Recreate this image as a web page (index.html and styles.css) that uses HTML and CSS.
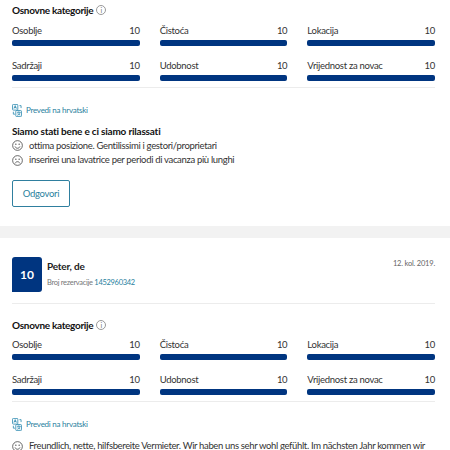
FILE: index.html
```html
<!DOCTYPE html>
<html lang="hr">
<head>
<meta charset="utf-8">
<title>Recenzije</title>
<link rel="stylesheet" href="styles.css">
</head>
<body>
<svg class="defs" width="0" height="0" aria-hidden="true">
  <symbol id="translate" viewBox="0 0 12 16">
    <g fill="none" stroke="#2c8ab0" stroke-width="1">
      <rect x="0.5" y="0.5" width="6.5" height="7" rx="1"/>
      <rect x="4.5" y="8" width="7" height="7.5" rx="1"/>
      <path d="M2.2 5.6 3.8 2l1.5 3.6M2.8 4.4h2"/>
      <path d="M6 10.2h4.5M8.2 9.2v1M9.8 10.4c-.5 1.900-1.900 3-3.500 3.500M7 11.400c.7 1 1.800 1.800 3 2.300"/>
      <path d="M9 2h2v3M1.500 9.500v3h2"/>
    </g>
  </symbol>
  <symbol id="happy" viewBox="0 0 12 12">
    <g fill="none" stroke="#333" stroke-width="0.8">
      <circle cx="6" cy="6" r="5.300"/>
      <path d="M3.300 7c.6 1.400 1.500 2 2.700 2s2.100-.6 2.700-2"/>
    </g>
    <circle cx="4.200" cy="4.500" r=".7" fill="#333"/><circle cx="7.800" cy="4.500" r=".7" fill="#333"/>
  </symbol>
  <symbol id="sad" viewBox="0 0 12 12">
    <g fill="none" stroke="#333" stroke-width="0.8">
      <circle cx="6" cy="6" r="5.300"/>
      <path d="M3.500 9c.6-1.200 1.400-1.700 2.500-1.700s1.900.5 2.500 1.700"/>
    </g>
    <circle cx="4.200" cy="4.500" r=".7" fill="#333"/><circle cx="7.800" cy="4.500" r=".7" fill="#333"/>
  </symbol>
</svg>

<section class="review first">
  <h3 class="cat-title">Osnovne kategorije <span class="info">i</span></h3>
  <div class="scores">
    <div class="score"><div class="score-head"><span>Osoblje</span><span>10</span></div><div class="bar"></div></div>
    <div class="score"><div class="score-head"><span>Čistoća</span><span>10</span></div><div class="bar"></div></div>
    <div class="score"><div class="score-head"><span>Lokacija</span><span>10</span></div><div class="bar"></div></div>
    <div class="score"><div class="score-head"><span>Sadržaji</span><span>10</span></div><div class="bar"></div></div>
    <div class="score"><div class="score-head"><span>Udobnost</span><span>10</span></div><div class="bar"></div></div>
    <div class="score"><div class="score-head"><span>Vrijednost za novac</span><span>10</span></div><div class="bar"></div></div>
  </div>
  <a class="translate"><svg class="t-icon"><use href="#translate"/></svg>Prevedi na hrvatski</a>
  <h4 class="rev-title">Siamo stati bene e ci siamo rilassati</h4>
  <p class="line"><svg class="face"><use href="#happy"/></svg>ottima posizione. Gentilissimi i gestori/proprietari</p>
  <p class="line"><svg class="face"><use href="#sad"/></svg>inserirei una lavatrice per periodi di vacanza più lunghi</p>
  <button class="reply">Odgovori</button>
</section>

<div class="band"></div>

<section class="review second">
  <header class="guest">
    <div class="badge">10</div>
    <div class="who">
      <div class="name">Peter, de</div>
      <div class="booking">Broj rezervacije <a>1452960342</a></div>
    </div>
    <div class="date">12. kol. 2019.</div>
  </header>
  <h3 class="cat-title">Osnovne kategorije <span class="info">i</span></h3>
  <div class="scores">
    <div class="score"><div class="score-head"><span>Osoblje</span><span>10</span></div><div class="bar"></div></div>
    <div class="score"><div class="score-head"><span>Čistoća</span><span>10</span></div><div class="bar"></div></div>
    <div class="score"><div class="score-head"><span>Lokacija</span><span>10</span></div><div class="bar"></div></div>
    <div class="score"><div class="score-head"><span>Sadržaji</span><span>10</span></div><div class="bar"></div></div>
    <div class="score"><div class="score-head"><span>Udobnost</span><span>10</span></div><div class="bar"></div></div>
    <div class="score"><div class="score-head"><span>Vrijednost za novac</span><span>10</span></div><div class="bar"></div></div>
  </div>
  <a class="translate"><svg class="t-icon"><use href="#translate"/></svg>Prevedi na hrvatski</a>
  <p class="line long"><svg class="face"><use href="#happy"/></svg>Freundlich, nette, hilfsbereite Vermieter. Wir haben uns sehr wohl gefühlt. Im nächsten Jahr kommen wir</p>
</section>
</body>
</html>
```
FILE: styles.css
```css
* { box-sizing: border-box; }
html, body { margin: 0; padding: 0; height: 450px; overflow: hidden; background: #fff; }
body { font-family: "Lato", "Open Sans", sans-serif; font-size: 10px; color: #333; line-height: 14px; }
.defs { position: absolute; }
.review { padding: 0 15px 0 12px; }
.first { padding-top: 3px; height: 226px; }
.second { padding-top: 19px; height: 212px; }
.band { height: 12px; background: #f2f2f2; }
.cat-title { margin: 0; font-size: 10px; letter-spacing: -0.3px; font-weight: 700; color: #111; line-height: 14px; display: flex; align-items: center; gap: 3px; }
.info { width: 10px; height: 10px; border: 1px solid #999; border-radius: 50%; font-size: 7px; line-height: 8px; letter-spacing: 0; font-weight: 400; color: #777; text-align: center; }
.scores { display: grid; grid-template-columns: repeat(3, 1fr); column-gap: 20px; row-gap: 12px; margin-top: 6px; padding-bottom: 6px; border-bottom: 1px solid #ececec; }
.score-head { display: flex; justify-content: space-between; height: 14px; line-height: 16px; font-size: 9.500px; letter-spacing: -0.3px; color: #333; }
.bar { height: 6px; margin-top: 3px; border-radius: 2px; background: #003580; }
.translate { display: flex; align-items: center; gap: 4px; margin-top: 15px; height: 14px; font-size: 8px; letter-spacing: -0.25px; color: #2a7f9e; }
.t-icon { width: 10px; height: 13px; }
.rev-title { margin: 7px 0 0; font-size: 10px; letter-spacing: -0.2px; line-height: 14px; font-weight: 700; color: #111; }
.line { display: flex; align-items: center; gap: 6px; margin: 0.500px 0 0; height: 14px; font-size: 9.500px; letter-spacing: -0.33px; color: #333; white-space: nowrap; }
.long { margin-top: 8px; letter-spacing: -0.35px; }
.face { width: 11px; height: 11px; flex: none; }
.reply { display: block; margin-top: 12.500px; width: 58px; height: 27px; padding: 0; background: #fff; border: 1px solid #2f7f9f; border-radius: 2px; font: 9.500px "Lato", sans-serif; letter-spacing: -0.3px; color: #2a7f9e; }
.guest { display: flex; align-items: flex-start; padding-bottom: 11px; border-bottom: 1px solid #ececec; margin-bottom: 14px; }
.guest + .cat-title + .scores { margin-top: 5px; }
.badge { width: 30px; height: 35px; background: #003580; color: #fff; border-radius: 3px 3px 3px 0; font-size: 12px; font-weight: 700; line-height: 35px; text-align: center; }
.who { margin-left: 5px; flex: 1; }
.name { font-size: 10px; letter-spacing: -0.2px; font-weight: 700; color: #222; margin-top: 2px; }
.booking { font-size: 7.500px; letter-spacing: -0.3px; color: #777; margin-top: 3px; }
.booking a { color: #2a7f9e; }
.date { font-size: 7.500px; letter-spacing: -0.2px; color: #666; margin-top: 0; }
```
